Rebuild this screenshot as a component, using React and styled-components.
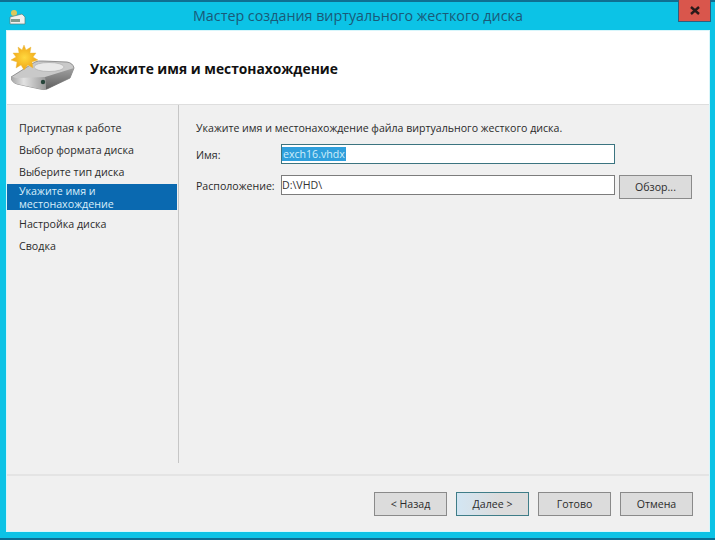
import styled, { createGlobalStyle } from "styled-components";

const Global = createGlobalStyle`
  html, body {
    margin: 0;
    padding: 0;
    background: #10bfe4;
  }
  * {
    box-sizing: border-box;
  }
`;

const Window = styled.div`
  width: 715px;
  height: 540px;
  display: flex;
  flex-direction: column;
  background: #0cc3e6;
  border-top: 2px solid #0f6f92;
  border-bottom: 2px solid #0b6c92;
  font-family: "Open Sans", "Noto Sans", sans-serif;
  font-size: 11px;
  color: #222;
`;

const TitleBar = styled.div`
  height: 29px;
  flex-shrink: 0;
  display: flex;
  align-items: center;
  padding-left: 9px;
  position: relative;
`;

const Title = styled.div`
  position: absolute;
  left: 193px;
  top: 4px;
  font-size: 14.3px;
  line-height: 20px;
  color: #1a5a78;
  white-space: nowrap;
`;

const CloseButton = styled.div`
  position: absolute;
  right: 4px;
  top: -2px;
  width: 33px;
  height: 22px;
  background: #d9564c;
  border: 1px solid #2d5f80;
  border-top: 0;
  display: flex;
  align-items: center;
  justify-content: center;
`;

const Client = styled.div`
  flex: 1;
  margin: 0 6px 7px 7px;
  display: flex;
  flex-direction: column;
  background: #f0f0f0;
  box-shadow: 0 0 0 1px #d8f6fb;
`;

const Header = styled.div`
  height: 74px;
  flex-shrink: 0;
  background: #fff;
  border-bottom: 1px solid #dedede;
  display: flex;
  align-items: center;
  padding-left: 4px;
`;

const HeaderText = styled.h1`
  margin: 2px 0 0 15px;
  font-size: 13.8px;
  font-weight: 700;
  color: #111;
  white-space: nowrap;
`;

const Middle = styled.div`
  flex: 0 0 371px;
  display: flex;
  align-items: flex-start;
  border-bottom: 2px solid #e4e4e4;
  padding-bottom: 11px;
`;

const Nav = styled.div`
  width: 170px;
  padding-top: 12px;
  display: flex;
  flex-direction: column;
  flex-shrink: 0;
`;

const NavItem = styled.div`
  padding: ${(p) => (p.$active ? "1px 12px 0" : "0 12px")};
  height: ${(p) => (p.$active ? "26px" : "22px")};
  line-height: ${(p) => (p.$active ? "13px" : "22px")};
  background: ${(p) => (p.$active ? "#0a69b0" : "transparent")};
  color: ${(p) => (p.$active ? "#d8eefa" : "#2b2b2b")};
  font-size: 10.7px;
  white-space: nowrap;
  margin-top: ${(p) => (p.$active ? "1px" : "0")};
  margin-bottom: ${(p) => (p.$active ? "3px" : "0")};
`;

const Content = styled.div`
  flex: 1;
  align-self: stretch;
  margin-left: 1px;
  border-left: 1px solid #c6c6c6;
  padding: 16px 0 0 17px;
`;

const Lead = styled.div`
  font-size: 10.6px;
  line-height: 15px;
  color: #2a2a2a;
  white-space: nowrap;
  margin-bottom: 8px;
`;

const FormRow = styled.div`
  display: flex;
  align-items: flex-start;
  margin-bottom: 11px;
`;

const Label = styled.div`
  width: 85px;
  height: 20px;
  font-size: 10.6px;
  line-height: 22px;
  color: #2a2a2a;
  white-space: nowrap;
`;

const Field = styled.div`
  width: 334px;
  height: 20px;
  background: #fff;
  border: 1px solid ${(p) => (p.$focused ? "#3b7480" : "#7c7c7c")};
  display: flex;
  align-items: center;
  font-size: 10.6px;
  color: #333;
`;

const Selected = styled.span`
  background: #2f9fdc;
  color: #cfeefa;
  line-height: 14px;
  padding: 0 1px;
`;

const Button = styled.div`
  width: 73px;
  height: 24px;
  background: ${(p) => (p.$primary ? "linear-gradient(90deg, #d3e6f3, #dcdcdc 60%)" : "#dcdcdc")};
  border: 1px solid ${(p) => (p.$primary ? "#3f7d88" : "#8a8a8a")};
  display: flex;
  align-items: center;
  justify-content: center;
  font-size: 10.6px;
  color: #2b2b2b;
  white-space: nowrap;
`;

const BrowseButton = styled(Button)`
  margin-left: 4px;
`;

const Footer = styled.div`
  flex: 1;
  display: flex;
  justify-content: flex-end;
  gap: 9px;
  padding: 16px 16px 0 0;
`;

const DiskIcon = () => (
  <svg width="64" height="46" viewBox="0 0 64 46">
    <defs>
      <linearGradient id="front" x1="0" y1="0" x2="1" y2="0">
        <stop offset="0" stopColor="#a9a9a9" />
        <stop offset="0.35" stopColor="#e2e2e2" />
        <stop offset="1" stopColor="#999999" />
      </linearGradient>
      <linearGradient id="side" x1="0" y1="0" x2="0" y2="1">
        <stop offset="0" stopColor="#a0a0a0" />
        <stop offset="1" stopColor="#5f5f5f" />
      </linearGradient>
      <radialGradient id="sun">
        <stop offset="0" stopColor="#ffd93f" />
        <stop offset="1" stopColor="#f0a516" />
      </radialGradient>
    </defs>
    <path d="M0 32 L24 17 Q27 15.5 32 16 L56 17 Q62 18 63 23 L59 33 L36 44 Q33 45 29 44 L6 39 Q0 37 0 32 Z" fill="#c9c9c9" stroke="#6f6f6f" strokeWidth="0.7" />
    <ellipse cx="38" cy="22" rx="15" ry="4.5" fill="#e9e9e9" stroke="#9a9a9a" strokeWidth="0.5" />
    <path d="M1 31 Q2 33 8 33 L34 32 L35 44 Q33 45 29 44 L6 39 Q0 37 1 31 Z" fill="url(#front)" />
    <path d="M34 32 L63 23 L59 33 L36 44 Q35 44.5 35 44 Z" fill="url(#side)" />
    <circle cx="32" cy="37" r="2.2" fill="#26443a" />
    <path d="M13 0 L15 5 L20 2 L19 8 L25 8 L22 12 L27 15 L21 17 L22 23 L17 20 L13 25 L10 20 L5 23 L6 17 L0 15 L5 12 L2 8 L8 8 L7 2 L11 5 Z" fill="url(#sun)" stroke="#e9bd4a" strokeWidth="0.4" />
  </svg>
);

const SmallIcon = () => (
  <svg width="17" height="16" viewBox="0 0 17 16">
    <circle cx="5" cy="4" r="3" fill="#dcc95a" />
    <path d="M1 8 L13 5 L16 8 L16 15 L1 15 Z" fill="#f1f1ee" stroke="#5a7f7a" strokeWidth="0.7" />
    <rect x="2" y="10" width="9" height="3" fill="#7f9a8e" />
  </svg>
);

export default function App() {
  return (
    <>
      <Global />
      <Window>
        <TitleBar>
          <SmallIcon />
          <Title>Мастер создания виртуального жесткого диска</Title>
          <CloseButton>
            <svg width="10" height="9" viewBox="0 0 10 9">
              <path d="M1 1 L9 8 M9 1 L1 8" stroke="#2a1a1a" strokeWidth="2.4" />
            </svg>
          </CloseButton>
        </TitleBar>
        <Client>
          <Header>
            <DiskIcon />
            <HeaderText>Укажите имя и местонахождение</HeaderText>
          </Header>
          <Middle>
            <Nav>
              <NavItem>Приступая к работе</NavItem>
              <NavItem>Выбор формата диска</NavItem>
              <NavItem>Выберите тип диска</NavItem>
              <NavItem $active>Укажите имя и<br />местонахождение</NavItem>
              <NavItem>Настройка диска</NavItem>
              <NavItem>Сводка</NavItem>
            </Nav>
            <Content>
              <Lead>Укажите имя и местонахождение файла виртуального жесткого диска.</Lead>
              <FormRow>
                <Label>Имя:</Label>
                <Field $focused><Selected>exch16.vhdx</Selected></Field>
              </FormRow>
              <FormRow>
                <Label>Расположение:</Label>
                <Field>D:\VHD\</Field>
                <BrowseButton>Обзор...</BrowseButton>
              </FormRow>
            </Content>
          </Middle>
          <Footer>
            <Button>&lt; Назад</Button>
            <Button $primary>Далее &gt;</Button>
            <Button>Готово</Button>
            <Button>Отмена</Button>
          </Footer>
        </Client>
      </Window>
    </>
  );
}
